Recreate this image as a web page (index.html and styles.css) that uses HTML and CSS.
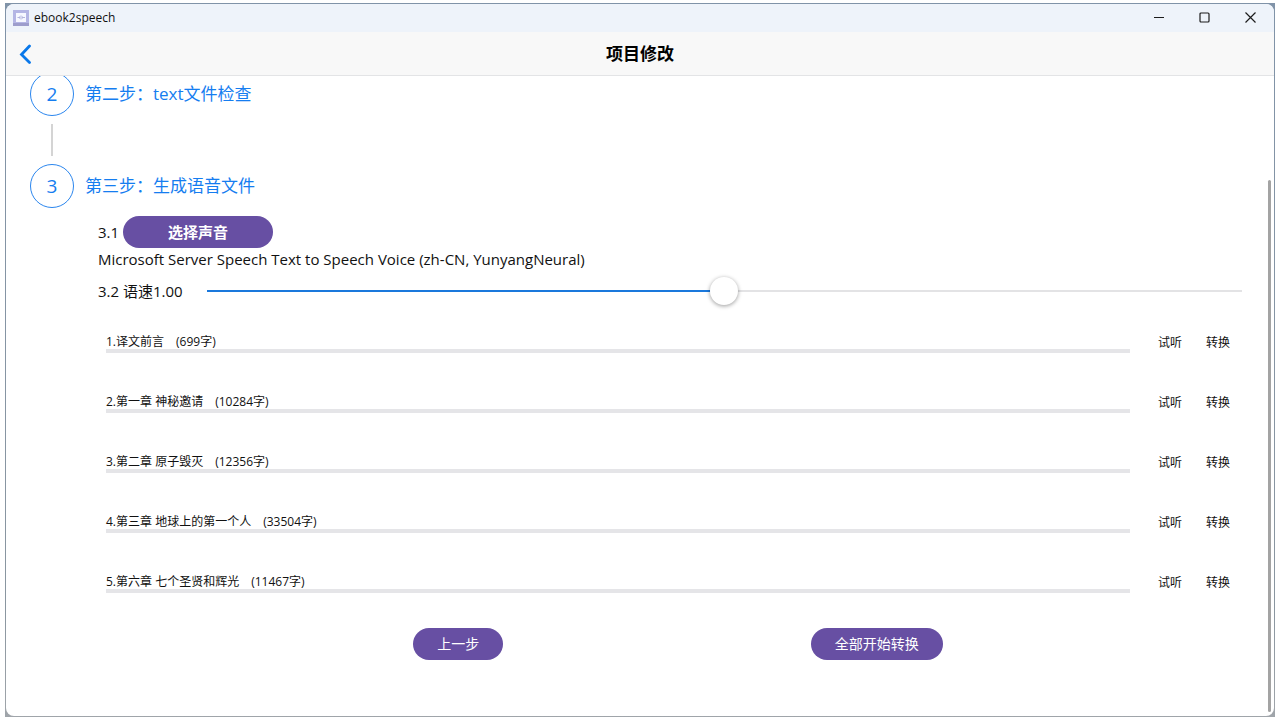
FILE: index.html
```html
<!DOCTYPE html>
<html lang="zh-CN">
<head>
<meta charset="utf-8">
<meta name="viewport" content="width=device-width, initial-scale=1">
<title>ebook2speech</title>
<link rel="stylesheet" href="styles.css">
</head>
<body>
<div class="frame">
  <div class="window">
    <div class="titlebar">
      <svg class="app-icon" width="16" height="16" viewBox="0 0 16 16" aria-hidden="true">
        <rect width="16" height="16" fill="#b4b5e4"/>
        <rect y="13" width="16" height="3" fill="#9d9dcc"/>
        <rect x="3" y="3" width="10" height="9" fill="#f6f7ff"/>
        <path d="M4.500 7.500h1.500M6.500 6.500v2M8 5.500v4M9.500 6.500v2M10 7.500h2" stroke="#b3b4dd" fill="none"/>
      </svg>
      <span class="app-name">ebook2speech</span>
      <div class="window-controls">
        <button class="control" type="button" aria-label="最小化"><svg width="12" height="12" viewBox="0 0 12 12"><path d="M1 5.500h10"/></svg></button>
        <button class="control" type="button" aria-label="最大化"><svg width="12" height="12" viewBox="0 0 12 12"><rect x="1" y="1" width="9" height="9" rx="1"/></svg></button>
        <button class="control" type="button" aria-label="关闭"><svg width="12" height="12" viewBox="0 0 12 12"><path d="M.5 .5l10 10M10.500 .5l-10 10"/></svg></button>
      </div>
    </div>

    <header class="header">
      <button class="back" type="button" aria-label="返回"><svg width="12" height="20" viewBox="0 0 12 20"><path d="M10.500 2L2.500 10.500l8 8"/></svg></button>
      <h1 class="title">项目修改</h1>
    </header>

    <main class="content">
      <section class="step step-scrolled">
        <div class="step-head"><span class="step-number">2</span><h2 class="step-title">第二步：text文件检查</h2></div>
        <div class="connector"></div>
      </section>

      <section class="step">
        <div class="step-head"><span class="step-number">3</span><h2 class="step-title">第三步：生成语音文件</h2></div>
        <div class="step-body">
          <div class="voice-row"><span>3.1</span><button class="pill pill-voice" type="button">选择声音</button></div>
          <p class="voice-name">Microsoft Server Speech Text to Speech Voice (zh-CN, YunyangNeural)</p>
          <div class="speed-row">
            <label class="speed-label" for="speed">3.2 语速1.00</label>
            <input class="slider" id="speed" type="range" min="0" max="2" step="0.01" value="1">
          </div>

          <ul class="chapters">
            <li class="chapter">
              <div class="chapter-info"><div class="chapter-name">1.译文前言<span class="count">(699字)</span></div><div class="bar"></div></div>
              <button class="action" type="button">试听</button><button class="action" type="button">转换</button>
            </li>
            <li class="chapter">
              <div class="chapter-info"><div class="chapter-name">2.第一章 神秘邀请<span class="count">(10284字)</span></div><div class="bar"></div></div>
              <button class="action" type="button">试听</button><button class="action" type="button">转换</button>
            </li>
            <li class="chapter">
              <div class="chapter-info"><div class="chapter-name">3.第二章 原子毁灭<span class="count">(12356字)</span></div><div class="bar"></div></div>
              <button class="action" type="button">试听</button><button class="action" type="button">转换</button>
            </li>
            <li class="chapter">
              <div class="chapter-info"><div class="chapter-name">4.第三章 地球上的第一个人<span class="count">(33504字)</span></div><div class="bar"></div></div>
              <button class="action" type="button">试听</button><button class="action" type="button">转换</button>
            </li>
            <li class="chapter">
              <div class="chapter-info"><div class="chapter-name">5.第六章 七个圣贤和辉光<span class="count">(11467字)</span></div><div class="bar"></div></div>
              <button class="action" type="button">试听</button><button class="action" type="button">转换</button>
            </li>
          </ul>

          <div class="footer">
            <button class="pill" type="button">上一步</button>
            <button class="pill" type="button">全部开始转换</button>
          </div>
        </div>
      </section>
      <div class="scroll-thumb"></div>
    </main>
  </div>
</div>
</body>
</html>
```

FILE: styles.css
```css
* { box-sizing: border-box; }

body {
  margin: 0;
  padding: 3px 5px;
  background: #fff;
  color: #111;
  font: 15px/24px "Open Sans", "Noto Sans CJK SC", sans-serif;
}

button {
  margin: 0;
  padding: 0;
  border: 0;
  background: none;
  color: inherit;
  font: inherit;
}

.frame {
  display: flex;
  min-height: calc(100vh - 6px);
  padding: 1px;
  background: linear-gradient(#8093a8, #8a96a0 85%, #a0a5aa);
}

.window {
  display: flex;
  flex: 1;
  flex-direction: column;
  overflow: hidden;
  border-radius: 8px;
  background: #fff;
}

.titlebar {
  display: flex;
  align-items: center;
  height: 28px;
  padding-left: 7px;
  background: #eef3fa;
}

.app-name {
  margin-left: 5px;
  font-size: 12px;
  line-height: 16px;
}

.window-controls {
  display: flex;
  margin-left: auto;
}

.control {
  display: flex;
  align-items: center;
  justify-content: center;
  width: 46px;
  height: 28px;
}

.control svg {
  fill: none;
  stroke: #1c1c1c;
  stroke-width: 1.2;
}

.header {
  display: grid;
  grid-template-columns: 44px 1fr 44px;
  align-items: center;
  height: 44px;
  border-bottom: 1px solid #e3e4e6;
  background: #f8f8f8;
}

.back {
  display: flex;
  align-items: center;
  height: 43px;
  padding-left: 13px;
}

.back svg {
  fill: none;
  stroke: #0a78ea;
  stroke-width: 2.8;
  stroke-linecap: round;
}

.title {
  margin: 0;
  color: #000;
  font-size: 17px;
  font-weight: 700;
  text-align: center;
}

.content {
  position: relative;
  flex: 1;
  overflow: hidden;
  padding: 0 24px 24px;
}

.step-scrolled { margin-top: -4px; }

.step-head {
  display: flex;
  align-items: center;
  gap: 11px;
  color: #157df0;
}

.step-number {
  display: flex;
  align-items: center;
  justify-content: center;
  width: 44px;
  height: 44px;
  border: 1px solid #2b86ee;
  border-radius: 50%;
  font-size: 19px;
}

.step-title {
  margin: 0;
  font-size: 17px;
  font-weight: 400;
}

.connector {
  width: 2px;
  height: 32px;
  margin: 8px 21px;
  background: #d4d4d4;
}

.step-body { padding: 8px 0 0 68px; }

.voice-row {
  display: flex;
  align-items: center;
  gap: 4px;
}

.pill {
  height: 32px;
  padding: 0 24px;
  border-radius: 16px;
  background: #674fa3;
  color: #fff;
  font-size: 14px;
}

.pill-voice {
  width: 150px;
  font-size: 15px;
  font-weight: 700;
}

.voice-name {
  margin: 0;
  line-height: 22px;
}

.speed-row {
  display: flex;
  align-items: center;
  gap: 24px;
  height: 42px;
  padding-right: 8px;
}

.speed-label {
  min-width: 84px;
  white-space: nowrap;
}

.slider {
  flex: 1;
  min-width: 0;
  height: 28px;
  margin: 0;
  appearance: none;
  background: linear-gradient(90deg, #1a78dc 50%, #e3e3e5 50%) center / 100% 2px no-repeat;
}

.slider::-webkit-slider-thumb {
  width: 28px;
  height: 28px;
  appearance: none;
  border-radius: 50%;
  background: #fff;
  box-shadow: 0 1px 4px rgba(0, 0, 0, .4);
}

.chapters {
  margin: 0;
  padding: 0 8px;
  list-style: none;
}

.chapter {
  display: flex;
  align-items: center;
  height: 60px;
  font-size: 12px;
}

.chapter-info {
  flex: 1;
  margin-right: 16px;
  padding-top: 4px;
}

.chapter-name { line-height: 14px; }

.count { margin-left: 12px; }

.bar {
  height: 4px;
  background: #e5e5e8;
}

.action {
  width: 48px;
  padding-top: 2px;
  line-height: 24px;
}

.footer {
  display: flex;
  justify-content: space-evenly;
  padding: 16px 0 0 8px;
}

.scroll-thumb {
  position: absolute;
  top: 104px;
  right: 3px;
  bottom: 4px;
  width: 3px;
  border-radius: 2px;
  background: #a3a3a3;
}
```
